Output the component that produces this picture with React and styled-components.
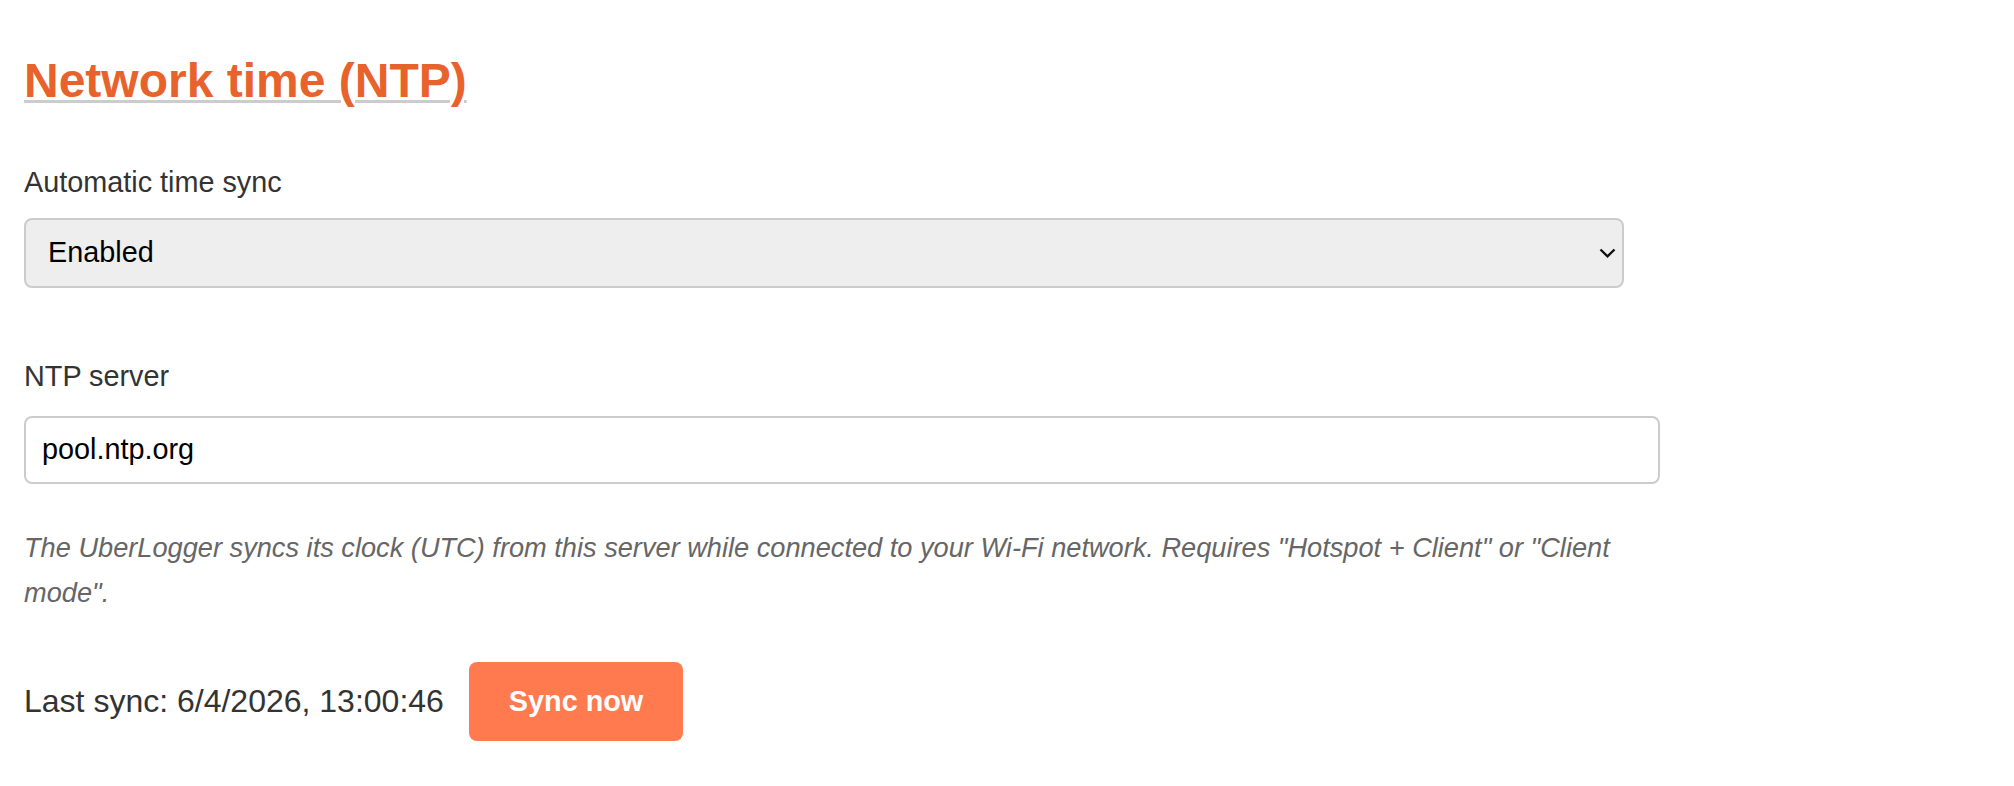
import React, { useState } from 'react';
import styled, { createGlobalStyle } from 'styled-components';

const GlobalStyle = createGlobalStyle`
  body {
    margin: 0;
    background: #fff;
    font-family: "Liberation Sans", Arial, sans-serif;
  }
`;

const App = () => {
  const [mode, setMode] = useState("enabled");
  const [server, setServer] = useState("pool.ntp.org");

  return (
    <Page>
      <GlobalStyle />
      <Title>Network time (NTP)</Title>

      <Label>Automatic time sync</Label>
      <SelectWrap>
        <Select value={mode} onChange={(e) => setMode(e.target.value)}>
          <option value="enabled">Enabled</option>
          <option value="disabled">Disabled</option>
        </Select>
        <Chevron width="17" height="10" viewBox="0 0 17 10">
          <path d="M1.5 1.5 L8.5 8.3 L15.5 1.5" fill="none" stroke="#111" strokeWidth="2.4" />
        </Chevron>
      </SelectWrap>

      <Label $gap>NTP server</Label>
      <Input type="text" value={server} onChange={(e) => setServer(e.target.value)} />

      <Hint>
        The UberLogger syncs its clock (UTC) from this server while connected to your Wi-Fi network.
        Requires "Hotspot + Client" or "Client mode".
      </Hint>

      <SyncRow>
        <LastSync>Last sync: 6/4/2026, 13:00:46</LastSync>
        <SyncBtn>Sync now</SyncBtn>
      </SyncRow>
    </Page>
  );
};

export default App;

// --- styles ---
const Page = styled.div` width: 1600px; padding: 52px 0 40px 24px; `;
const Title = styled.h2` margin: 0; font-size: 48px; line-height: 57.6px; font-weight: 700; color: #e8622c; text-decoration: underline; text-decoration-color: #cccccc; text-decoration-thickness: 3px; text-underline-offset: 3px; `;
const Label = styled.div` margin-top: ${props => props.$gap ? '70.7px' : '55px'}; margin-bottom: ${props => props.$gap ? '22.7px' : '18.7px'}; font-size: 28.8px; line-height: 34.56px; color: #333; `;
const SelectWrap = styled.div` position: relative; width: 100%; `;
const Select = styled.select` display: block; width: 100%; height: 70px; box-sizing: border-box; appearance: none; -webkit-appearance: none; padding: 0 48px 2px 22px; border: 2px solid #cccccc; border-radius: 8px; background: #eeeeee; color: #000; font-family: "Liberation Sans", Arial, sans-serif; font-size: 28.8px; outline: none; `;
const Chevron = styled.svg` position: absolute; right: 8px; top: 30px; pointer-events: none; `;
const Input = styled.input` display: block; width: 100%; height: 64px; box-sizing: content-box; padding: 0 16px; border: 2px solid #cccccc; border-radius: 8px; background: #fff; color: #000; font-family: "Liberation Sans", Arial, sans-serif; font-size: 28.8px; outline: none; `;
const Hint = styled.p` margin: 42.4px 0 0; font-size: 27.2px; line-height: 44.8px; font-style: italic; color: #666; `;
const SyncRow = styled.div` display: flex; align-items: center; gap: 25px; margin-top: 46px; `;
const LastSync = styled.span` font-size: 32px; color: #333; `;
const SyncBtn = styled.button` height: 79px; padding: 0 40px; border: none; border-radius: 8px; background: #ff7a4f; color: #fff; font-family: "Liberation Sans", Arial, sans-serif; font-size: 28.8px; font-weight: 700; cursor: pointer; `;
